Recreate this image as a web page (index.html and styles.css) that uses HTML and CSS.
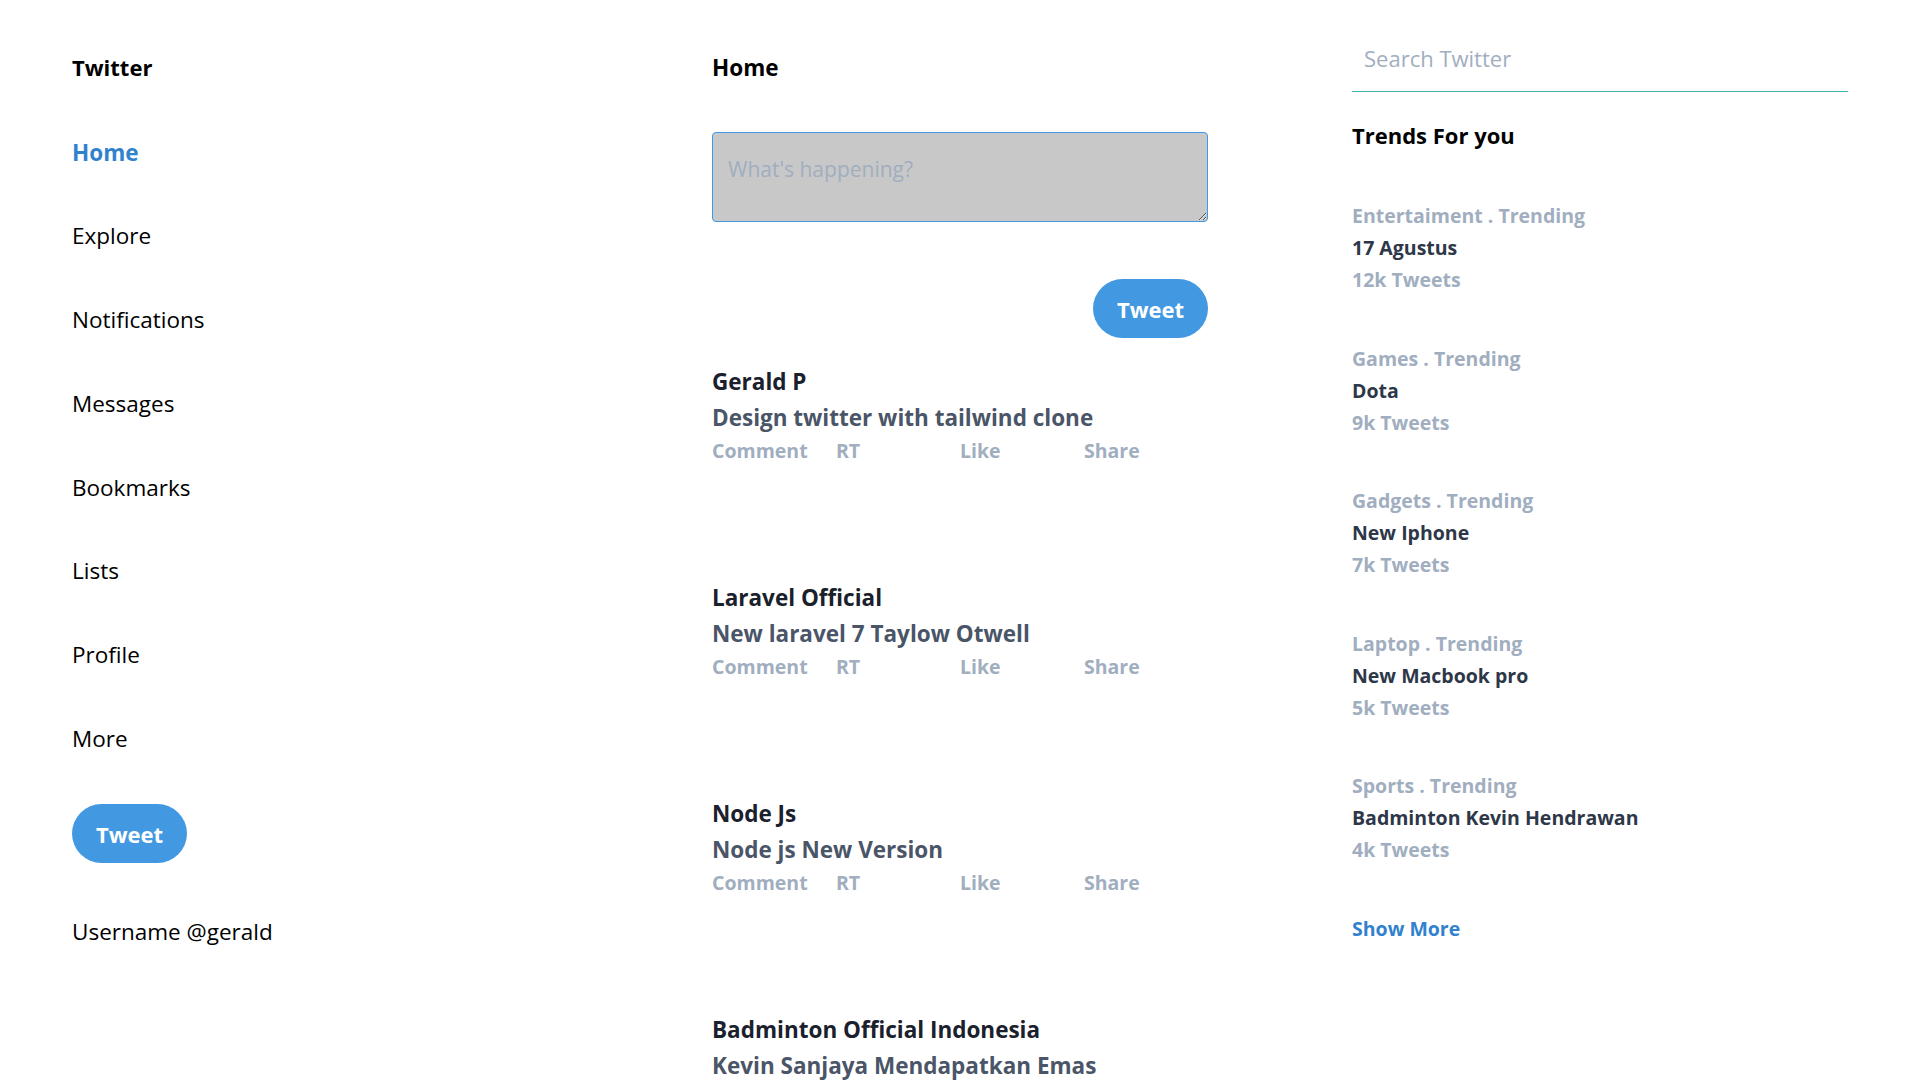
FILE: index.html
```html
<!DOCTYPE html>
<html lang="en">
<head>
<meta charset="utf-8">
<title>Twitter clone</title>
<link rel="stylesheet" href="styles.css">
</head>
<body>
<div class="layout">
  <aside class="col left">
    <div class="brand">Twitter</div>
    <nav class="nav">
      <a class="nav-item active">Home</a>
      <a class="nav-item">Explore</a>
      <a class="nav-item">Notifications</a>
      <a class="nav-item">Messages</a>
      <a class="nav-item">Bookmarks</a>
      <a class="nav-item">Lists</a>
      <a class="nav-item">Profile</a>
      <a class="nav-item">More</a>
    </nav>
    <button class="btn-tweet">Tweet</button>
    <div class="username">Username @gerald</div>
  </aside>

  <main class="col middle">
    <div class="page-title">Home</div>
    <textarea class="composer" placeholder="What's happening?"></textarea>
    <div class="composer-actions">
      <button class="btn-tweet">Tweet</button>
    </div>

    <article class="tweet">
      <div class="tweet-name">Gerald P</div>
      <div class="tweet-text">Design twitter with tailwind clone</div>
      <div class="tweet-actions"><span>Comment</span><span>RT</span><span>Like</span><span>Share</span></div>
    </article>
    <article class="tweet">
      <div class="tweet-name">Laravel Official</div>
      <div class="tweet-text">New laravel 7 Taylow Otwell</div>
      <div class="tweet-actions"><span>Comment</span><span>RT</span><span>Like</span><span>Share</span></div>
    </article>
    <article class="tweet">
      <div class="tweet-name">Node Js</div>
      <div class="tweet-text">Node js New Version</div>
      <div class="tweet-actions"><span>Comment</span><span>RT</span><span>Like</span><span>Share</span></div>
    </article>
    <article class="tweet">
      <div class="tweet-name">Badminton Official Indonesia</div>
      <div class="tweet-text">Kevin Sanjaya Mendapatkan Emas</div>
      <div class="tweet-actions"><span>Comment</span><span>RT</span><span>Like</span><span>Share</span></div>
    </article>
  </main>

  <aside class="col right">
    <input class="search" type="text" placeholder="Search Twitter">
    <div class="trends-title">Trends For you</div>
    <div class="trend">
      <div class="trend-cat">Entertaiment . Trending</div>
      <div class="trend-name">17 Agustus</div>
      <div class="trend-count">12k Tweets</div>
    </div>
    <div class="trend">
      <div class="trend-cat">Games . Trending</div>
      <div class="trend-name">Dota</div>
      <div class="trend-count">9k Tweets</div>
    </div>
    <div class="trend">
      <div class="trend-cat">Gadgets . Trending</div>
      <div class="trend-name">New Iphone</div>
      <div class="trend-count">7k Tweets</div>
    </div>
    <div class="trend">
      <div class="trend-cat">Laptop . Trending</div>
      <div class="trend-name">New Macbook pro</div>
      <div class="trend-count">5k Tweets</div>
    </div>
    <div class="trend">
      <div class="trend-cat">Sports . Trending</div>
      <div class="trend-name">Badminton Kevin Hendrawan</div>
      <div class="trend-count">4k Tweets</div>
    </div>
    <a class="show-more">Show More</a>
  </aside>
</div>
</body>
</html>
```

FILE: styles.css
```css
* { box-sizing: border-box; }

html, body {
  margin: 0;
  padding: 0;
  background: #ffffff;
}

body {
  font-family: "Open Sans", "Noto Sans", sans-serif;
  color: #000000;
  height: 1080px;
  overflow: hidden;
}

.layout {
  display: grid;
  grid-template-columns: 1fr 1fr 1fr;
}

.col {
  padding: 0 72px;
  display: flex;
  flex-direction: column;
  align-items: flex-start;
}

/* ---------- Left ---------- */
.left { padding-top: 49px; }

.brand {
  font-size: 22px;
  font-weight: 700;
  line-height: 36px;
  margin-bottom: 49.5px;
}

.nav {
  display: flex;
  flex-direction: column;
  gap: 47.8px;
}

.nav-item {
  font-size: 22.5px;
  line-height: 36px;
  color: #000000;
  text-decoration: none;
}

.nav-item.active {
  color: #3182ce;
  font-weight: 700;
}

.btn-tweet {
  width: 115px;
  height: 59px;
  border: none;
  border-radius: 9999px;
  background: #4299e1;
  color: #ffffff;
  font-family: "Open Sans", "Noto Sans", sans-serif;
  font-size: 22px;
  font-weight: 700;
  padding: 0;
  cursor: pointer;
}

.left .btn-tweet { margin-top: 47px; }

.username {
  margin-top: 51px;
  font-size: 22.5px;
  line-height: 36px;
}

/* ---------- Middle ---------- */
.middle { padding-top: 50px; align-items: stretch; }

.page-title {
  font-size: 22.5px;
  font-weight: 700;
  line-height: 36px;
}

.composer {
  margin-top: 46px;
  width: 100%;
  height: 90px;
  background: #c8c8c8;
  border: 1px solid #4299e1;
  border-radius: 4px;
  padding: 20px 15px;
  font-family: "Open Sans", "Noto Sans", sans-serif;
  font-size: 21px;
  line-height: 32px;
  color: #2d3748;
  outline: none;
}

.composer::placeholder { color: #a0aec0; }

.composer-actions {
  display: flex;
  justify-content: flex-end;
  margin-top: 57px;
}

.tweet { margin-top: 25px; }
.tweet + .tweet { margin-top: 113px; }

.tweet-name {
  font-size: 22.5px;
  font-weight: 700;
  line-height: 37px;
  color: #1a202c;
}

.tweet-text {
  font-size: 22.5px;
  font-weight: 700;
  line-height: 36px;
  color: #4a5568;
}

.tweet-actions {
  display: grid;
  grid-template-columns: repeat(4, 1fr);
  font-size: 19.5px;
  font-weight: 700;
  line-height: 30px;
  color: #a0aec0;
}

/* ---------- Right ---------- */
.right { padding-top: 36px; align-items: stretch; }

.search {
  width: 100%;
  height: 56px;
  border: none;
  border-bottom: 1px solid #3fb1a8;
  padding: 0 12px 12px;
  font-family: "Open Sans", "Noto Sans", sans-serif;
  font-size: 22px;
  color: #2d3748;
  outline: none;
  background: transparent;
}

.search::placeholder { color: #a0aec0; }

.trends-title {
  margin-top: 25px;
  font-size: 22px;
  font-weight: 700;
  line-height: 36px;
}

.trend { margin-top: 47px; }
.trend + .trend { margin-top: 46.5px; }

.trend-cat,
.trend-name,
.trend-count {
  font-size: 19.5px;
  font-weight: 700;
  line-height: 32px;
}

.trend-cat, .trend-count { color: #a0aec0; }
.trend-name { color: #2d3748; }

.show-more {
  margin-top: 47px;
  font-size: 19.5px;
  font-weight: 700;
  line-height: 32px;
  color: #3182ce;
  text-decoration: none;
}
```
